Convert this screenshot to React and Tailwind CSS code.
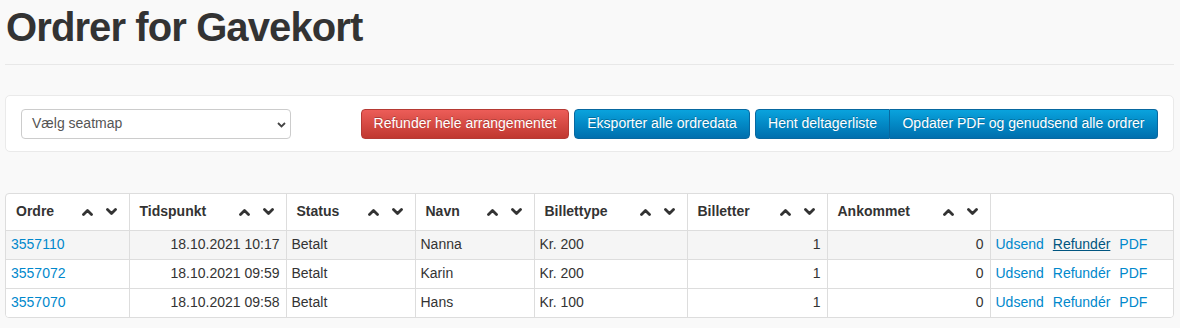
/* eslint-disable */

import React from 'react';

const font = { fontFamily: '"Liberation Sans", Arial, sans-serif' };

const columns = [
  { label: 'Ordre', width: 'w-[123px]' },
  { label: 'Tidspunkt', width: 'w-[157px]' },
  { label: 'Status', width: 'w-[129px]' },
  { label: 'Navn', width: 'w-[119px]' },
  { label: 'Billettype', width: 'w-[153px]' },
  { label: 'Billetter', width: 'w-[140px]' },
  { label: 'Ankommet', width: 'w-[163px]' },
];

const orders = [
  { id: '3557110', time: '18.10.2021 10:17', status: 'Betalt', name: 'Nanna', type: 'Kr. 200', tickets: 1, arrived: 0, hover: true },
  { id: '3557072', time: '18.10.2021 09:59', status: 'Betalt', name: 'Karin', type: 'Kr. 200', tickets: 1, arrived: 0 },
  { id: '3557070', time: '18.10.2021 09:58', status: 'Betalt', name: 'Hans', type: 'Kr. 100', tickets: 1, arrived: 0 },
];

const Chevron = ({ up }) => (
  <svg width="11" height="8" viewBox="0 0 11 8" className="block">
    <path
      d={up ? 'M1.5 6.5 L5.5 2.5 L9.5 6.5' : 'M1.5 1.5 L5.5 5.5 L9.5 1.5'}
      fill="none"
      stroke="#333"
      strokeWidth="2.8"
      strokeLinecap="round"
      strokeLinejoin="round"
    />
  </svg>
);

const btnShadow = '[text-shadow:0_-1px_0_rgba(0,0,0,0.25)]';

const App = () => {
  return (
    <div className="min-h-screen bg-[#f9f9f9] pl-[5px] pr-[6px]" style={font}>
      <h1 className="pt-[5px] pl-[1px] text-[40px] leading-[44px] font-bold text-[#333] tracking-[-0.9px]">
        Ordrer for Gavekort
      </h1>
      <div className="mt-[15px] border-t border-[#e8e8e8]" />

      {/* toolbar */}
      <div className="mt-[30px] h-[57px] bg-white border border-[#eaeaea] rounded-[5px] flex items-center justify-between px-[15px]">
        <div className="relative w-[270px] h-[30px] border border-[#ccc] rounded-[4px] bg-white flex items-center pl-[10px] text-[14px] text-[#555]">
          Vælg seatmap
          <svg width="9" height="6" viewBox="0 0 9 6" className="absolute right-[4px] top-[12px]">
            <path d="M1 1 L4.5 4.5 L8 1" fill="none" stroke="#444" strokeWidth="1.8" />
          </svg>
        </div>

        <div className="flex items-center gap-[5px] text-[14px] text-white">
          <button className={`w-[208px] h-[30px] rounded-[4px] border border-[#b53a34] bg-gradient-to-b from-[#ec5d58] to-[#c0372f] ${btnShadow}`}>
            Refunder hele arrangementet
          </button>
          <button className={`w-[176px] h-[30px] rounded-[4px] border border-[#0868a0] bg-gradient-to-b from-[#0aa3dd] to-[#006fae] ${btnShadow}`}>
            Eksporter alle ordredata
          </button>
          <div className="flex">
            <button className={`w-[135px] h-[30px] rounded-l-[4px] border border-[#0868a0] bg-gradient-to-b from-[#0aa3dd] to-[#006fae] ${btnShadow}`}>
              Hent deltagerliste
            </button>
            <button className={`w-[268px] h-[30px] rounded-r-[4px] border border-l-0 border-[#0868a0] bg-gradient-to-b from-[#0aa3dd] to-[#006fae] ${btnShadow}`}>
              Opdater PDF og genudsend alle ordrer
            </button>
          </div>
        </div>
      </div>

      {/* orders table */}
      <div className="mt-[41px] bg-white border border-[#ddd] rounded-[4px] overflow-hidden">
        <table className="w-full table-fixed border-collapse text-[14px] text-[#333]">
          <thead>
            <tr className="h-[36px]">
              {columns.map((c, i) => (
                <th
                  key={c.label}
                  className={`${c.width} p-0 text-left font-bold ${i > 0 ? 'border-l border-[#ddd]' : ''}`}
                >
                  <div className="flex items-center justify-between pl-[10px] pr-[12px]">
                    <span>{c.label}</span>
                    <span className="flex items-center gap-[13px]">
                      <Chevron up />
                      <Chevron />
                    </span>
                  </div>
                </th>
              ))}
              <th className="border-l border-[#ddd]" />
            </tr>
          </thead>
          <tbody>
            {orders.map((o) => (
              <tr key={o.id} className={`h-[29px] border-t border-[#ddd] ${o.hover ? 'bg-[#f5f5f5]' : 'bg-white'}`}>
                <td className="px-[5px]">
                  <a className="text-[#0088cc]">{o.id}</a>
                </td>
                <td className="px-[6px] text-right border-l border-[#ddd]">{o.time}</td>
                <td className="px-[5px] border-l border-[#ddd]">{o.status}</td>
                <td className="px-[5px] border-l border-[#ddd]">{o.name}</td>
                <td className="px-[5px] border-l border-[#ddd]">{o.type}</td>
                <td className="px-[6px] text-right border-l border-[#ddd]">{o.tickets}</td>
                <td className="px-[6px] text-right border-l border-[#ddd]">{o.arrived}</td>
                <td className="px-[5px] border-l border-[#ddd]">
                  <div className="flex gap-[9px] text-[#0088cc]">
                    <a>Udsend</a>
                    <a className={o.hover ? 'text-[#005580] underline' : ''}>Refundér</a>
                    <a>PDF</a>
                  </div>
                </td>
              </tr>
            ))}
          </tbody>
        </table>
      </div>
    </div>
  );
};

export default App;
